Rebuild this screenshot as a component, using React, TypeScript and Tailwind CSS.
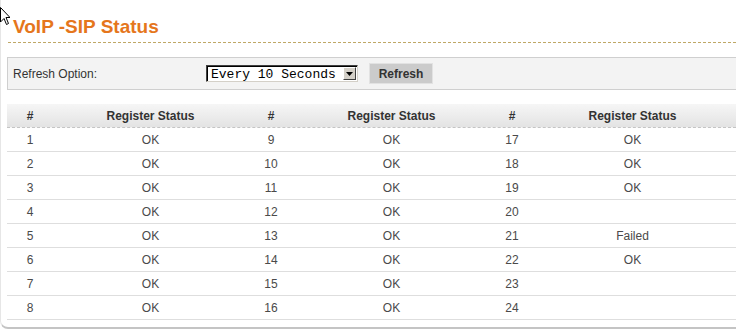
const left = [1, 2, 3, 4, 5, 6, 7, 8];
const status: Record<number, string> = {
  1: "OK", 2: "OK", 3: "OK", 4: "OK", 5: "OK", 6: "OK", 7: "OK", 8: "OK",
  9: "OK", 10: "OK", 11: "OK", 12: "OK", 13: "OK", 14: "OK", 15: "OK", 16: "OK",
  17: "OK", 18: "OK", 19: "OK", 20: "", 21: "Failed", 22: "OK", 23: "", 24: "",
};

function Cursor() {
  return (
    <svg className="absolute left-0 top-[7px]" width="10" height="20" viewBox="0 0 10 20">
      <path d="M0.5 0.5 L0.5 15 L4 11.5 L6.5 17.5 L8.5 16.5 L6 10.5 L10 10.5 Z" fill="#fff" stroke="#000" strokeWidth="1" />
    </svg>
  );
}

function Select() {
  return (
    <div className="flex h-[17px] w-[152px] items-center border border-t-[#404040] border-l-[#404040] border-r-[#d4d0c8] border-b-[#d4d0c8] bg-white shadow-[inset_1px_1px_0_#000]">
      <span className="flex-1 pl-[4px] pt-[1px] text-[13px] leading-none text-black [font-family:'Liberation_Mono',monospace]">
        Every 10 Seconds
      </span>
      <span className="mr-[1px] flex h-[13px] w-[13px] items-center justify-center border border-t-white border-l-white border-r-[#404040] border-b-[#404040] bg-[#d4d0c8]">
        <svg width="7" height="4" viewBox="0 0 7 4">
          <path d="M0 0 H7 L3.5 4 Z" fill="#000" />
        </svg>
      </span>
    </div>
  );
}

export default function App() {
  return (
    <div className="relative h-[332px] w-[736px] overflow-hidden bg-white [font-family:'Liberation_Sans',Arial,sans-serif]">
      <Cursor />
      <div className="rounded-bl-[8px] border-b-2 border-l border-b-[#c4c4c4] border-l-[#e6e6e6] pb-[7px]">
        <div className="ml-[7px] border-b border-dashed border-[#bfa866] pb-[4px] pt-[16px]">
          <h1 className="pl-[5px] text-[19px] font-bold leading-[22px] text-[#e5761c]">VoIP -SIP Status</h1>
        </div>

        <div className="ml-[6px] mt-[14px] flex h-[33px] items-center border border-r-0 border-[#cfcfcf] bg-[#f3f3f3] pl-[5px]">
          <span className="w-[193px] text-[12px] text-[#333]">Refresh Option:</span>
          <Select />
          <button className="ml-[11px] h-[21px] w-[64px] border border-[#e2e2e2] bg-[#cbcbcb] text-[12px] font-bold text-[#333]">
            Refresh
          </button>
        </div>

        <div className="ml-[6px] mt-[14px]">
          <div className="grid h-[24px] grid-cols-[46px_195px_46px_195px_46px_195px] items-center border-b border-dashed border-[#c4c4c4] bg-gradient-to-b from-[#f6f6f6] to-[#e3e3e3] text-[12px] font-bold text-[#333]">
            {[0, 1, 2].map((g) => (
              <div key={g} className="contents">
                <span className="text-center">#</span>
                <span className="text-center">Register Status</span>
              </div>
            ))}
          </div>
          {left.map((n) => (
            <div
              key={n}
              className="grid h-[24px] grid-cols-[46px_195px_46px_195px_46px_195px] items-center border-b border-[#dedede] text-[12px] text-[#4a4a4a]"
            >
              {[n, n + 8, n + 16].map((id) => (
                <div key={id} className="contents">
                  <span className="text-center">{id}</span>
                  <span className="text-center">{status[id]}</span>
                </div>
              ))}
            </div>
          ))}
        </div>
      </div>
    </div>
  );
}
